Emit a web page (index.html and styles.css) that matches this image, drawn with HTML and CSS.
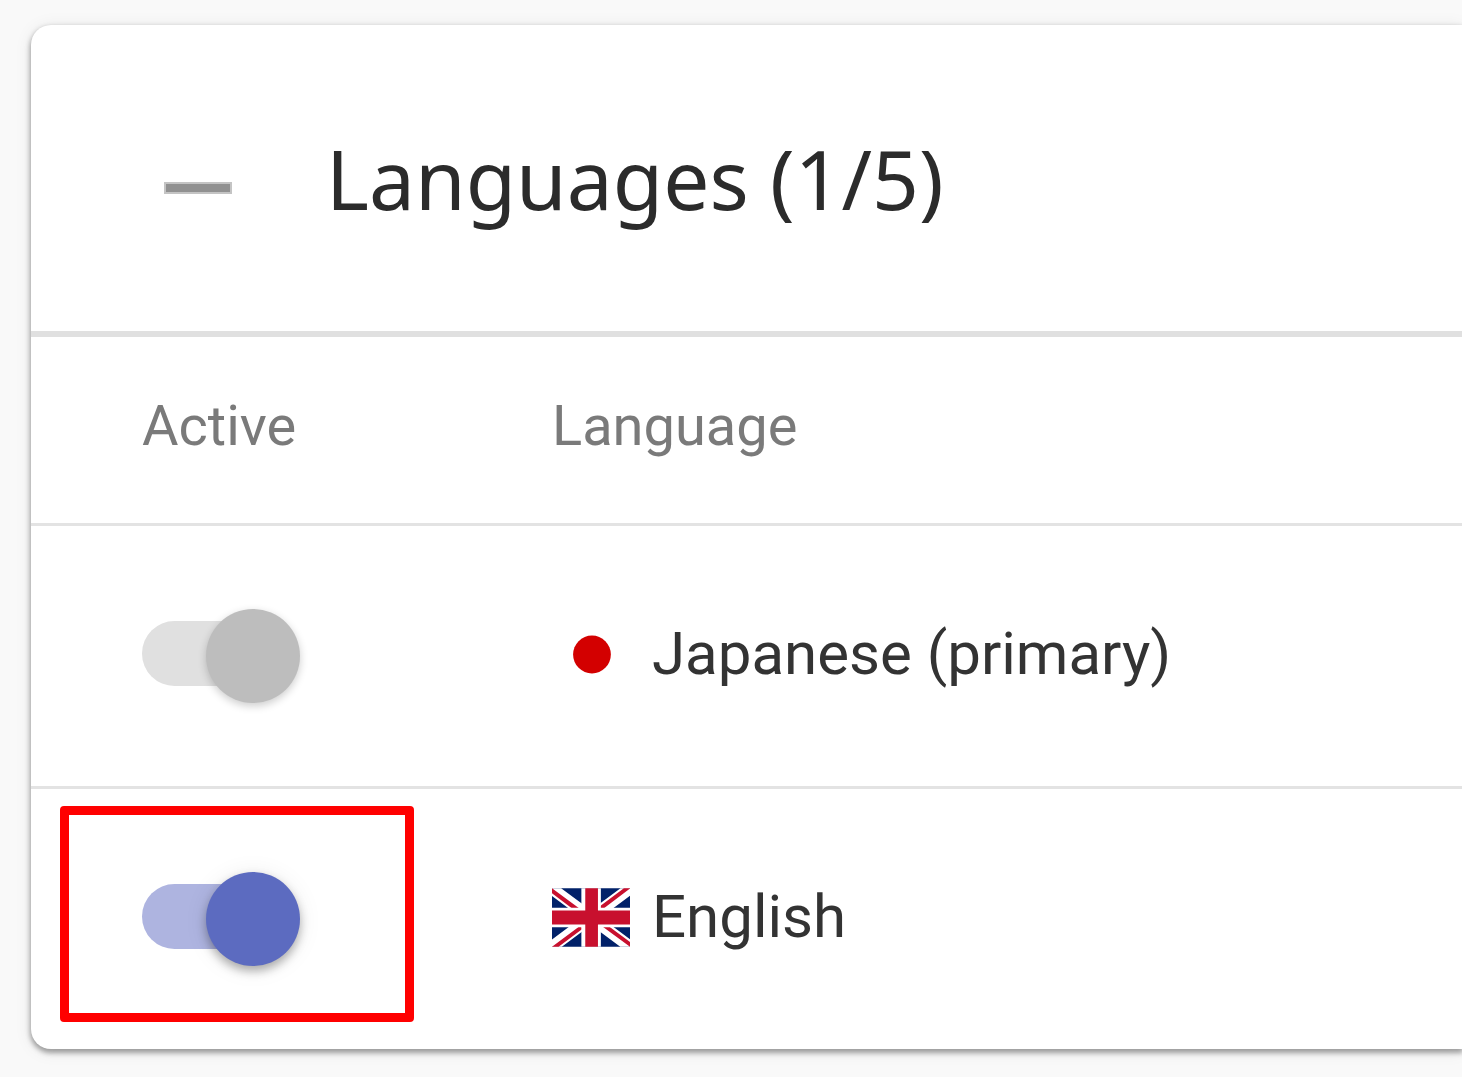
FILE: index.html
```
<!DOCTYPE html>
<html lang="en">
<head>
    <meta charset="UTF-8">
    <meta name="viewport" content="width=device-width, initial-scale=1.0">
    <title>Languages</title>
    <link rel="stylesheet" href="styles.css">
</head>
<body>
    <main class="page">
        <section class="card">
            <header class="card-header">
                <button type="button" class="collapse" aria-label="Collapse">
                    <svg viewBox="0 0 68 12" width="68" height="12"><path fill="#c4c4c4" d="M0 0h68v12H0z"/><path fill="#919191" d="M2 2h64v8H2z"/></svg>
                </button>
                <h1>Languages (1/5)</h1>
            </header>
            <table class="languages">
                <thead>
                    <tr>
                        <th class="col-active">Active</th>
                        <th>Language</th>
                    </tr>
                </thead>
                <tbody>
                    <tr>
                        <td><input type="checkbox" class="toggle" aria-labelledby="lang-ja" checked disabled></td>
                        <td>
                            <span class="lang">
                                <svg class="flag" viewBox="0 0 640 480"><path fill="#fff" d="M0 0h640v480H0z"/><circle cx="328" cy="240" r="155" fill="#d30000"/></svg>
                                <span id="lang-ja">Japanese (primary)</span>
                            </span>
                        </td>
                    </tr>
                    <tr>
                        <td class="marked"><input type="checkbox" class="toggle" aria-labelledby="lang-en" checked></td>
                        <td>
                            <span class="lang">
                                <svg class="flag" viewBox="0 0 640 480">
                                    <path fill="#012169" d="M0 0h640v480H0z"/>
                                    <path fill="#fff" d="M75 0l244 181L562 0h78v62L400 241l240 178v61h-80L320 301 81 480H0v-60l239-178L0 64V0h75z"/>
                                    <path fill="#c8102e" d="M424 281l216 159v40L369 281h55zm-184 20l6 35L54 480H0l240-179zM640 0v3L391 191l2-44L590 0h50zM0 0l239 176h-60L0 42V0z"/>
                                    <path fill="#fff" d="M241 0v480h160V0H241zM0 160v160h640V160H0z"/>
                                    <path fill="#c8102e" d="M0 182v116h640V182H0zM273 0v480h104V0H273z"/>
                                </svg>
                                <span id="lang-en">English</span>
                            </span>
                        </td>
                    </tr>
                </tbody>
            </table>
        </section>
    </main>
</body>
</html>
```
FILE: styles.css
```
*, *::before, *::after {
    box-sizing: border-box;
}
body {
    margin: 0;
    background: #fff;
    color: #333;
    font-family: Roboto, sans-serif;
}
.page {
    min-height: 100vh;
    margin-right: 6px;
    padding: 25px 0 26px 31px;
    background: #f9f9f9;
    overflow: hidden;
}
.card {
    background: #fff;
    border-radius: 20px 0 0 20px;
    box-shadow: 0 3px 5px 1px rgba(0, 0, 0, 0.34), 0 2px 18px rgba(0, 0, 0, 0.08);
}
.card-header {
    display: flex;
    align-items: center;
    gap: 94px;
    height: 312px;
    padding-left: 133px;
    border-bottom: 6px solid #e0e0e0;
}
.collapse {
    display: flex;
    padding: 20px 0 0;
    border: none;
    background: none;
    cursor: pointer;
}
h1 {
    margin: 0;
    color: #2b2b2b;
    font-family: "Noto Sans", sans-serif;
    font-size: 82px;
    font-weight: 400;
    line-height: 112px;
}
.languages {
    width: 100%;
    border-collapse: separate;
    border-spacing: 0;
    table-layout: fixed;
}
th, td {
    padding: 0 0 0 111px;
    text-align: left;
    vertical-align: middle;
}
th {
    height: 189px;
    padding-bottom: 8px;
    border-bottom: 3px solid #e3e3e3;
    color: #7a7a7a;
    font-size: 56px;
    font-weight: 400;
}
td {
    height: 263px;
    border-bottom: 3px solid #e3e3e3;
    font-size: 60px;
}
tr:last-child td {
    height: 260px;
    border-bottom: none;
}
.col-active {
    width: 410px;
}
.lang {
    display: flex;
    align-items: center;
    gap: 22px;
    padding-bottom: 4px;
    line-height: 70px;
}
.flag {
    width: 78px;
    height: 59px;
}
.toggle {
    appearance: none;
    display: block;
    position: relative;
    width: 158px;
    height: 94px;
    margin: 0;
    cursor: pointer;
}
.toggle::before {
    content: "";
    position: absolute;
    top: 12px;
    left: 0;
    width: 140px;
    height: 65px;
    border-radius: 33px;
    background: #aeb4e0;
}
.toggle::after {
    content: "";
    position: absolute;
    top: 0;
    right: 0;
    width: 94px;
    height: 94px;
    border-radius: 50%;
    background: #5c6bc0;
    box-shadow: 0 5px 10px rgba(0, 0, 0, 0.3), 0 2px 24px rgba(0, 0, 0, 0.08);
}
.toggle:disabled {
    cursor: default;
}
.toggle:disabled::before {
    background: #e0e0e0;
}
.toggle:disabled::after {
    background: #bdbdbd;
    box-shadow: 0 3px 8px rgba(0, 0, 0, 0.2);
}
/* red frame around the active switch */
.marked {
    position: relative;
}
.marked::after {
    content: "";
    position: absolute;
    top: 17px;
    left: 29px;
    width: 354px;
    height: 216px;
    border: 9px solid #f00;
    border-radius: 4px;
    pointer-events: none;
}
```
